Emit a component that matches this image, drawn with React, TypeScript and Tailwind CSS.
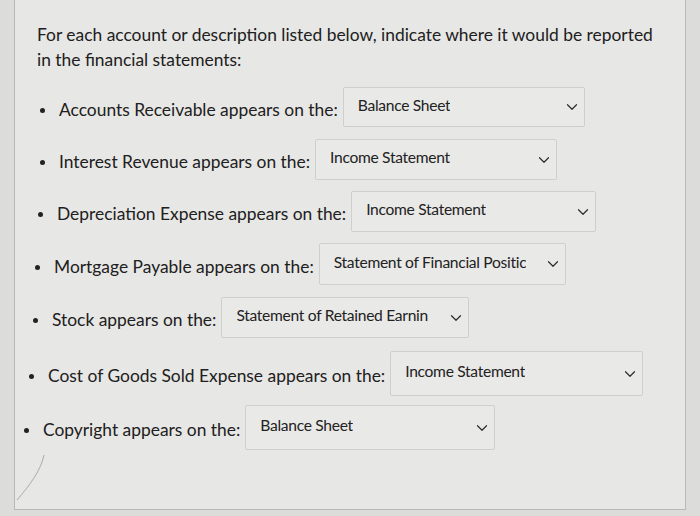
import { ChevronDown } from 'lucide-react';

interface Row {
  label: string;
  value: string;
  rowClass: string;
  selectClass: string;
}

const rows: Row[] = [
  {
    label: 'Accounts Receivable appears on the:',
    value: 'Balance Sheet',
    rowClass: 'ml-[25px] mt-[12px]',
    selectClass: 'w-[242px] h-[40px]',
  },
  {
    label: 'Interest Revenue appears on the:',
    value: 'Income Statement',
    rowClass: 'ml-[25px] mt-[12px]',
    selectClass: 'w-[242px] h-[41px]',
  },
  {
    label: 'Depreciation Expense appears on the:',
    value: 'Income Statement',
    rowClass: 'ml-[23px] mt-[11px]',
    selectClass: 'w-[245px] h-[41px]',
  },
  {
    label: 'Mortgage Payable appears on the:',
    value: 'Statement of Financial Positic',
    rowClass: 'ml-[20px] mt-[11px]',
    selectClass: 'w-[247px] h-[42px]',
  },
  {
    label: 'Stock appears on the:',
    value: 'Statement of Retained Earnin',
    rowClass: 'ml-[18px] mt-[12px]',
    selectClass: 'w-[248px] h-[41px]',
  },
  {
    label: 'Cost of Goods Sold Expense appears on the:',
    value: 'Income Statement',
    rowClass: 'ml-[14px] mt-[13px]',
    selectClass: 'w-[253px] h-[45px]',
  },
  {
    label: 'Copyright appears on the:',
    value: 'Balance Sheet',
    rowClass: 'ml-[9px] mt-[9px]',
    selectClass: 'w-[250px] h-[45px]',
  },
];

function Select({ value, className }: { value: string; className: string }) {
  return (
    <div
      className={`${className} flex items-center justify-between rounded-[2px] border border-[#cfcfcc] bg-[#e9e9e7] pl-[14px] pr-[3px]`}
    >
      <span className="truncate pb-[3px] text-[15.6px] tracking-[-0.3px] text-[#222]">{value}</span>
      <ChevronDown className="ml-1 h-[18px] w-[18px] shrink-0 text-[#2e2e2e]" strokeWidth={1.6} />
    </div>
  );
}

export default function App() {
  return (
    <div
      className="relative h-[516px] w-[700px] overflow-hidden bg-[#dcdcda]"
      style={{ fontFamily: 'Lato, "Open Sans", sans-serif' }}
    >
      <div className="ml-[14px] h-[510px] w-[672px] border-x border-b border-[#b9b9b6] bg-[#e7e7e5] pt-[22px]">
        <p className="ml-[22px] w-[630px] text-[17.4px] leading-[25px] text-[#202020]">
          For each account or description listed below, indicate where it would be reported in the financial statements:
        </p>
        <div className="mt-[3px] flex flex-col">
          {rows.map((row) => (
            <div key={row.label} className={`${row.rowClass} flex items-center`}>
              <span className="mr-[14px] mt-[6px] h-[5px] w-[5px] rounded-full bg-[#222]" />
              <span className="pt-[6px] text-[17.4px] text-[#202020]">{row.label}</span>
              <div className="ml-[5px]">
                <Select value={row.value} className={row.selectClass} />
              </div>
            </div>
          ))}
        </div>
      </div>
      <svg className="absolute left-0 top-0" width="700" height="516" fill="none">
        <path d="M44 455 C 41 470, 30 485, 17 500" stroke="#9a9a98" strokeWidth="0.8" />
      </svg>
    </div>
  );
}
